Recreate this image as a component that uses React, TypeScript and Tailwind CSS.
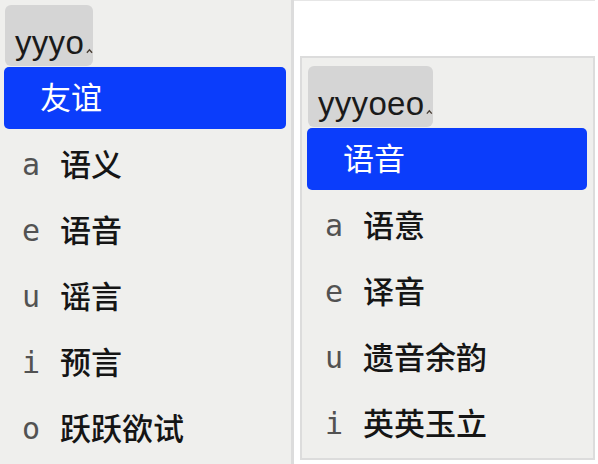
import React from 'react';

interface Candidate {
  key: string;
  text: string;
}

interface ImePanelProps {
  preedit: string;
  selected: string;
  items: Candidate[];
  boxWidth: string;
}

const font = { fontFamily: '"Liberation Sans", "Noto Sans CJK SC", sans-serif' };
const mono = { fontFamily: '"DejaVu Sans Mono", monospace' };

const Caret = () => (
  <svg width="8" height="6" viewBox="0 0 8 6" className="ml-[2px] mb-[5px]">
    <path d="M1 5 L4 1.5 L7 5" fill="none" stroke="#4a3f35" strokeWidth="1.6" />
  </svg>
);

const ImePanel: React.FC<ImePanelProps> = ({ preedit, selected, items, boxWidth }) => {
  return (
    <div className="flex flex-col">
      {/* composition string */}
      <div className={`h-[61px] ${boxWidth} ml-[1px] rounded-[6px] bg-[#d5d5d5] flex items-end pl-[10px] pb-[7px]`}>
        <span className="text-[33px] leading-none text-[#1a1a1a] tracking-[0.3px]">{preedit}</span>
        <Caret />
      </div>

      {/* highlighted candidate */}
      <div className="h-[62px] mt-[1px] rounded-[5px] bg-[#0b3dfb] flex items-center pl-[36px]">
        <span className="text-[31px] leading-none text-white">{selected}</span>
      </div>

      {/* other candidates */}
      <div className="flex flex-col mt-[3px]">
        {items.map((item) => (
          <div key={item.key} className="h-[66px] flex items-center pl-[18px]">
            <span className="w-[38px] text-[30px] leading-none text-[#525252]" style={mono}>{item.key}</span>
            <span className="text-[31px] leading-none font-medium text-[#151515]">{item.text}</span>
          </div>
        ))}
      </div>
    </div>
  );
};

export default function App() {
  return (
    <div className="w-[598px] h-[464px] bg-white flex overflow-hidden" style={font}>
      {/* left window */}
      <div className="w-[294px] h-[464px] bg-[#efefed] border-r-[3px] border-[#dcdcdc] pt-[5px] pl-[4px] pr-[5px]">
        <ImePanel
          preedit="yyyo"
          selected="友谊"
          boxWidth="w-[88px]"
          items={[
            { key: 'a', text: '语义' },
            { key: 'e', text: '语音' },
            { key: 'u', text: '谣言' },
            { key: 'i', text: '预言' },
            { key: 'o', text: '跃跃欲试' },
          ]}
        />
      </div>

      {/* right window */}
      <div className="flex flex-col pl-[6px] border-t border-[#e6e6e6]">
        <div className="h-[55px]" />
        <div className="w-[295px] h-[404px] bg-[#efefed] border-2 border-[#dcdcdc] pt-[8px] pl-[5px] pr-[6px]">
          <ImePanel
            preedit="yyyoeo"
            selected="语音"
            boxWidth="w-[125px]"
            items={[
              { key: 'a', text: '语意' },
              { key: 'e', text: '译音' },
              { key: 'u', text: '遗音余韵' },
              { key: 'i', text: '英英玉立' },
            ]}
          />
        </div>
      </div>
    </div>
  );
}
